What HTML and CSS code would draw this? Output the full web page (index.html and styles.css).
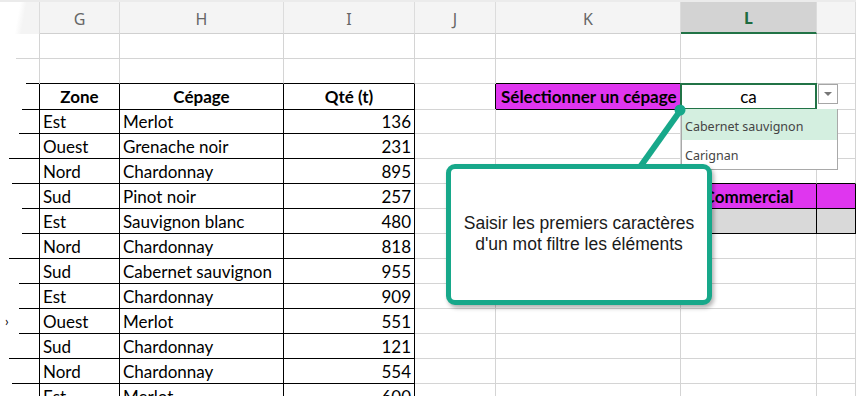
FILE: index.html
```html
<!DOCTYPE html>
<html lang="fr">
<head>
  <meta charset="UTF-8">
  <title>Liste déroulante - filtre</title>
  <link rel="stylesheet" href="styles.css">
</head>
<body>
  <div class="sheet">
    <!-- column letters -->
    <div class="row heads">
      <div class="hd first"></div>
      <div class="hd">G</div>
      <div class="hd">H</div>
      <div class="hd">I</div>
      <div class="hd">J</div>
      <div class="hd">K</div>
      <div class="hd on">L</div>
      <div class="hd"></div>
    </div>

    <div class="row">
      <div class="c stub"><i class="edge cut-g"></i></div>
      <div class="c"></div><div class="c"></div><div class="c"></div>
      <div class="c"></div><div class="c"></div><div class="c"></div><div class="c"></div>
    </div>
    <div class="row">
      <div class="c stub"><i class="edge dark cut-d"></i></div>
      <div class="c above"></div><div class="c above"></div><div class="c above"></div>
      <div class="c"></div><div class="c above"></div><div class="c"></div><div class="c"></div>
    </div>

    <!-- table header + picker -->
    <div class="row">
      <div class="c stub t"><i class="edge dark cut-c"></i></div>
      <div class="c t th">Zone</div>
      <div class="c t th">Cépage</div>
      <div class="c t th">Qté (t)</div>
      <div class="c t-right"></div>
      <div class="c pick">Sélectionner un cépage</div>
      <div class="c sel">ca</div>
      <div class="c"></div>
    </div>

    <div class="row">
      <div class="c stub t"><i class="edge dark cut-b"></i></div>
      <div class="c t">Est</div><div class="c t">Merlot</div><div class="c t num">136</div>
      <div class="c"></div><div class="c"></div><div class="c"></div><div class="c"></div>
    </div>
    <div class="row">
      <div class="c stub t"><i class="edge dark cut-e"></i></div>
      <div class="c t">Ouest</div><div class="c t">Grenache noir</div><div class="c t num">231</div>
      <div class="c"></div><div class="c"></div><div class="c"></div><div class="c"></div>
    </div>
    <div class="row">
      <div class="c stub t"><i class="edge dark cut-f"></i></div>
      <div class="c t">Nord</div><div class="c t">Chardonnay</div><div class="c t num">895</div>
      <div class="c"></div><div class="c above"></div><div class="c above"></div><div class="c above"></div>
    </div>
    <div class="row">
      <div class="c stub t"><i class="edge dark cut-c"></i></div>
      <div class="c t">Sud</div><div class="c t">Pinot noir</div><div class="c t num">257</div>
      <div class="c t-right"></div>
      <div class="c band t"></div>
      <div class="c band t th">Commercial</div>
      <div class="c band t"></div>
    </div>
    <div class="row">
      <div class="c stub t"><i class="edge dark cut-c"></i></div>
      <div class="c t">Est</div><div class="c t">Sauvignon blanc</div><div class="c t num">480</div>
      <div class="c t-right"></div>
      <div class="c grey t"></div><div class="c grey t"></div><div class="c grey t"></div>
    </div>
    <div class="row">
      <div class="c stub t"><i class="edge dark cut-e"></i></div>
      <div class="c t">Nord</div><div class="c t">Chardonnay</div><div class="c t num">818</div>
      <div class="c"></div><div class="c"></div><div class="c"></div><div class="c"></div>
    </div>
    <div class="row">
      <div class="c stub t"><i class="edge dark cut-b"></i></div>
      <div class="c t">Sud</div><div class="c t">Cabernet sauvignon</div><div class="c t num">955</div>
      <div class="c"></div><div class="c"></div><div class="c"></div><div class="c"></div>
    </div>
    <div class="row">
      <div class="c stub t"><i class="edge dark cut-b"></i></div>
      <div class="c t">Est</div><div class="c t">Chardonnay</div><div class="c t num">909</div>
      <div class="c"></div><div class="c"></div><div class="c"></div><div class="c"></div>
    </div>
    <div class="row">
      <div class="c stub t"><span class="crumb">›</span><i class="edge dark cut-b"></i></div>
      <div class="c t">Ouest</div><div class="c t">Merlot</div><div class="c t num">551</div>
      <div class="c"></div><div class="c"></div><div class="c"></div><div class="c"></div>
    </div>
    <div class="row">
      <div class="c stub t"><i class="edge dark cut-e"></i></div>
      <div class="c t">Sud</div><div class="c t">Chardonnay</div><div class="c t num">121</div>
      <div class="c"></div><div class="c"></div><div class="c"></div><div class="c"></div>
    </div>
    <div class="row">
      <div class="c stub t"><i class="edge dark cut-f"></i></div>
      <div class="c t">Nord</div><div class="c t">Chardonnay</div><div class="c t num">554</div>
      <div class="c"></div><div class="c"></div><div class="c"></div><div class="c"></div>
    </div>
    <div class="row last">
      <div class="c stub t"><i class="edge dark cut-f"></i></div>
      <div class="c t">Est</div><div class="c t">Merlot</div><div class="c t num">600</div>
      <div class="c"></div><div class="c"></div><div class="c"></div><div class="c"></div>
    </div>

    <!-- data validation dropdown -->
    <div class="dd-btn"><span class="tri"></span></div>
    <ul class="dd-list">
      <li class="hit">Cabernet sauvignon</li>
      <li>Carignan</li>
    </ul>

    <!-- callout -->
    <svg class="pointer" width="60" height="70" viewBox="0 0 60 70">
      <line x1="10" y1="68" x2="50" y2="12" stroke="#17a88a" stroke-width="6"/>
      <circle cx="50" cy="11" r="5.5" fill="#17a88a"/>
    </svg>
    <div class="callout">
      Saisir les premiers caractères<br>d'un mot filtre les éléments
    </div>
  </div>
</body>
</html>
```

FILE: styles.css
```css
* {
  box-sizing: border-box;
}

body {
  margin: 0;
  background: #fff;
  overflow: hidden;
}

.sheet {
  position: relative;
  width: 856px;
  height: 396px;
  overflow: hidden;
  font-family: Lato, 'Liberation Sans', sans-serif;
  font-size: 17px;
  color: #000;
}

.row {
  display: grid;
  grid-template-columns: 40px 80px 164px 131px 81px 185px 136px 39px;
  height: 25px;
}

/* the sheet goes on below the window */
.row.last .c {
  line-height: 26px;
}

/* column letters */
.heads {
  height: 34px;
  background: #f4f4f4;
  border-top: 2px solid #ebebeb;
}

.hd {
  display: flex;
  align-items: center;
  justify-content: center;
  border-right: 1px solid #dcdcdc;
  border-bottom: 1px solid #d0d0d0;
  font-family: 'Noto Sans', sans-serif;
  font-size: 16px;
  color: #666;
  padding-top: 2px;
}

.hd.first {
  background: linear-gradient(100deg, #fff 0, #fff 45%, #f4f4f4 60%);
  border-bottom: none;
}

.hd.on {
  background: #d3d3d3;
  border-bottom: 2px solid #217346;
  color: #1e6b40;
  font-weight: bold;
}

/* cells */
.c {
  border-right: 1px solid #d4d4d4;
  border-bottom: 1px solid #d4d4d4;
  padding: 0 3px;
  line-height: 25px;
  white-space: nowrap;
  overflow: hidden;
}

.stub {
  position: relative;
  border-bottom: none;
  padding: 0;
  display: flex;
  justify-content: flex-end;
  align-items: flex-end;
}

.edge {
  display: block;
  height: 1px;
  background: #d4d4d4;
}

.edge.dark {
  background: #000;
}

.cut-b { width: 20px; }
.cut-c { width: 17px; }
.cut-d { width: 13px; }
.cut-e { width: 30px; }
.cut-f { width: 27px; }
.cut-g { width: 23px; }

.crumb {
  position: absolute;
  left: 5px;
  top: 0;
  font-size: 13px;
}

.t {
  border-right-color: #000;
  border-bottom-color: #000;
}

.t-right {
  border-right-color: #000;
}

.above {
  border-bottom-color: #000;
}

.th {
  font-weight: bold;
  text-align: center;
}

.num {
  text-align: right;
}

.pick {
  background: #df36ef;
  border-right-color: #000;
  border-bottom-color: #000;
  font-weight: bold;
  padding-left: 5px;
}

.sel {
  position: relative;
  text-align: center;
  overflow: visible;
}

.sel::after {
  content: '';
  position: absolute;
  left: -1px;
  top: -1px;
  right: -1px;
  bottom: -1px;
  border: 2px solid #217346;
}

.band {
  background: #df36ef;
}

.grey {
  background: #d9d9d9;
}

/* dropdown */
.dd-btn {
  position: absolute;
  left: 818px;
  top: 84px;
  width: 20px;
  height: 20px;
  background: #fff;
  border: 1px solid #a6a6a6;
  display: flex;
  align-items: center;
  justify-content: center;
}

.tri {
  width: 0;
  height: 0;
  border-left: 4px solid transparent;
  border-right: 4px solid transparent;
  border-top: 4px solid #777;
}

.dd-list {
  position: absolute;
  left: 681px;
  top: 109px;
  width: 157px;
  height: 61px;
  margin: 0;
  padding: 0;
  list-style: none;
  background: #fff;
  border: 1px solid #a9a9a9;
  border-top: none;
  font-family: 'Noto Sans', sans-serif;
  font-size: 12.5px;
  color: #444;
}

.dd-list li {
  height: 29px;
  line-height: 31px;
  padding-left: 3px;
}

.dd-list li.hit {
  height: 31px;
  line-height: 35px;
  background: #d4efe0;
}

/* callout */
.pointer {
  position: absolute;
  left: 630px;
  top: 99px;
}

.callout {
  position: absolute;
  left: 446px;
  top: 164px;
  width: 266px;
  height: 141px;
  border: 5px solid #17a88a;
  border-radius: 9px;
  background: #fff;
  box-shadow: 2px 3px 4px rgba(0, 0, 0, 0.3);
  display: flex;
  align-items: center;
  justify-content: center;
  text-align: center;
  font-family: 'Liberation Sans', Arial, sans-serif;
  font-size: 17.5px;
  line-height: 21px;
  color: #1a1a1a;
  padding-bottom: 2px;
}
```
